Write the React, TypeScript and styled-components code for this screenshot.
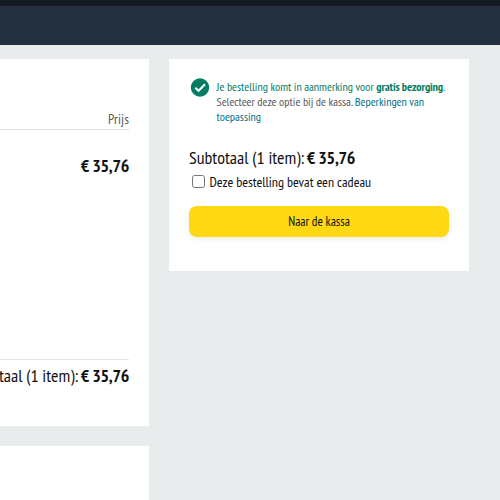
import React from 'react';
import styled, { createGlobalStyle } from 'styled-components';

const GlobalStyle = createGlobalStyle`
  * { box-sizing: border-box; }
  body {
    margin: 0;
    background: #e8ecec;
    color: #0f1111;
    font-family: "PT Sans Narrow", "Open Sans", sans-serif;
    font-stretch: 75%;
    overflow: hidden;
  }
`;

const Page = styled.div`
  width: 500px;
  height: 500px;
  overflow: hidden;
`;

const TopStrip = styled.div`
  height: 6px;
  background: #131a22;
`;

const NavBar = styled.nav`
  height: 39px;
  background: #232f3e;
`;

const Content = styled.main`
  display: grid;
  grid-template-columns: 149px 300px;
  column-gap: 20px;
  align-items: start;
  padding-top: 14px;
`;

const CartColumn = styled.div`
  display: flex;
  flex-direction: column;
  gap: 20px;
`;

const Panel = styled.section<{ $height: number }>`
  height: ${(p) => p.$height}px;
  background: #fff;
`;

const CartPanel = styled(Panel)`
  padding: 50px 20px 0 0;
`;

const ColumnHeading = styled.div`
  height: 21px;
  border-bottom: 1px solid #dddfdf;
  color: #565959;
  font-size: 14px;
  line-height: 20px;
  letter-spacing: 0.1px;
  text-align: right;
`;

const CartItem = styled.div`
  height: 230px;
  padding-top: 24px;
  border-bottom: 1px solid #e2e5e5;
  text-align: right;
`;

const Price = styled.strong`
  font-size: 18px;
  line-height: 24px;
  font-weight: 700;
  letter-spacing: -0.32px;
`;

const TotalLine = styled.div<{ $gap: number }>`
  display: flex;
  gap: ${(p) => p.$gap}px;
  font-size: 18px;
  line-height: 24px;
  white-space: nowrap;
`;

const CartTotal = styled(TotalLine)`
  justify-content: flex-end;
  padding-top: 4px;
`;

const CheckoutPanel = styled(Panel)`
  padding: 20px;
`;

const DeliveryNotice = styled.div`
  display: flex;
  gap: 6.5px;
  height: 67px;
  padding-left: 1px;
`;

const CheckIcon = styled.svg`
  flex: none;
  width: 20px;
  height: 20px;
  margin-top: -1px;
`;

const DeliveryText = styled.p`
  margin: 0;
  color: #565959;
  font-size: 12px;
  line-height: 15px;
  white-space: nowrap;

  b {
    letter-spacing: -0.15px;
  }
`;

const Eligible = styled.span`
  color: #067d62;
`;

const TermsLink = styled.a`
  color: #007185;
`;

const GiftOption = styled.label`
  display: flex;
  align-items: center;
  gap: 4.5px;
  height: 24px;
  padding-left: 3px;
  font-size: 14px;
  line-height: 20px;
  white-space: nowrap;
`;

const Checkbox = styled.input`
  width: 13px;
  height: 13px;
  margin: -2px 0 0;
`;

const CheckoutButton = styled.button`
  width: 260px;
  height: 31px;
  margin: 12px 0 0;
  padding: 0;
  border: 0;
  border-radius: 8px;
  background: #ffd814;
  box-shadow: 0 2px 5px rgba(213, 217, 217, 0.5);
  color: #0f1111;
  font-family: inherit;
  font-stretch: inherit;
  font-size: 13px;
  line-height: 29px;
`;

export default function App() {
  return (
    <Page>
      <GlobalStyle />
      <TopStrip />
      <NavBar />
      <Content>
        <CartColumn>
          <CartPanel $height={367}>
            <ColumnHeading>Prijs</ColumnHeading>
            <CartItem>
              <Price>€ 35,76</Price>
            </CartItem>
            <CartTotal $gap={2.5}>
              <span>Subtotaal (1 item):</span>
              <Price>€ 35,76</Price>
            </CartTotal>
          </CartPanel>
          <Panel $height={80} />
        </CartColumn>
        <CheckoutPanel $height={212}>
          <DeliveryNotice>
            <CheckIcon viewBox="0 0 20 20">
              <circle cx="10" cy="9.5" r="9.2" fill="#067d62" />
              <path d="M5.3 9.7 8.6 12.8 15 6.3" fill="none" stroke="#fff" strokeWidth="2" />
            </CheckIcon>
            <DeliveryText>
              <Eligible>
                Je bestelling komt in aanmerking voor <b>gratis bezorging</b>.
              </Eligible>
              <br />
              Selecteer deze optie bij de kassa. <TermsLink>Beperkingen van</TermsLink>
              <br />
              <TermsLink>toepassing</TermsLink>
            </DeliveryText>
          </DeliveryNotice>
          <TotalLine $gap={2.5}>
            <span>Subtotaal (1 item):</span>
            <Price>€ 35,76</Price>
          </TotalLine>
          <GiftOption>
            <Checkbox type="checkbox" />
            Deze bestelling bevat een cadeau
          </GiftOption>
          <CheckoutButton>Naar de kassa</CheckoutButton>
        </CheckoutPanel>
      </Content>
    </Page>
  );
}
